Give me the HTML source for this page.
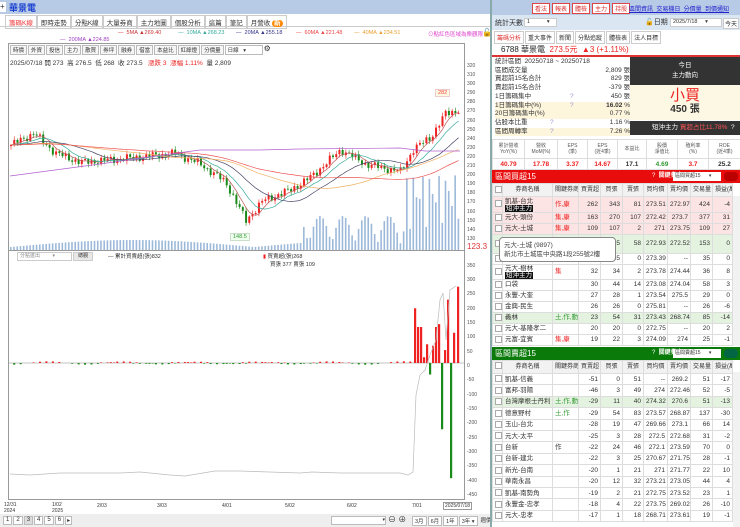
<!DOCTYPE html>
<html><head><meta charset="utf-8">
<style>
*{box-sizing:border-box;margin:0;padding:0}
body{width:740px;height:527px;overflow:hidden;background:#fff;font-family:"Liberation Sans","Noto Sans CJK TC",sans-serif;font-size:7px;color:#333;position:relative}
.a{position:absolute;white-space:nowrap}
table{border-collapse:collapse;table-layout:fixed;position:absolute;font-size:6.5px}
td{border:1px solid #ddd;padding:0 2px;text-align:right;overflow:hidden;white-space:nowrap;height:11.4px;line-height:9px}
table.rt td{height:11px;line-height:8px}
td.l{text-align:left}
td.c{text-align:center}
.hd td{background:#f2f2f2;text-align:center;font-size:6px;height:13px!important}
.pk td{background:#fde4e4}
.gn td{background:#e4f3e0}
.cb{display:inline-block;width:7px;height:7px;border:1px solid #aaa;background:#fff;vertical-align:middle}
.r{color:#e22}.g{color:#393}
.tag{background:#111;color:#fff;padding:0 1px}
</style></head><body>

<div class="a" style="left:0;top:0;width:490px;height:14px;background:#b7cbe6"></div>
<div class="a" style="left:0;top:2px;width:6px;height:10px;background:#fff;font-size:8px;line-height:10px">+</div>
<div class="a" style="left:9px;top:1px;font-size:9px;color:#1a3fd0;font-weight:bold">華景電</div>
<div class="a" style="left:0;top:14px;width:490px;height:13px;background:#fff;border-bottom:1px solid #ccc"></div>
<div class="a" style="left:5px;top:15px;font-size:6.5px;display:flex;gap:0">
<span style="border:1px solid #ccc;padding:1px 3px;color:#e33">籌碼K線</span>
<span style="border:1px solid #ccc;padding:1px 3px">即時走勢</span>
<span style="border:1px solid #ccc;padding:1px 3px">分點K線</span>
<span style="border:1px solid #ccc;padding:1px 3px">大量券商</span>
<span style="border:1px solid #ccc;padding:1px 3px">主力地圖</span>
<span style="border:1px solid #ccc;padding:1px 3px">個股分析</span>
<span style="border:1px solid #ccc;padding:1px 3px">這篇</span>
<span style="border:1px solid #ccc;padding:1px 3px">筆記</span>
<span style="border:1px solid #ccc;padding:1px 3px">月營收 <b style="background:#f80;color:#fff;border-radius:4px;padding:0 2px">新</b></span>
</div>
<div class="a" style="left:118px;top:30px;font-size:5.5px"><span style="color:#c33">— &nbsp;5MA ▲269.40</span></div>
<div class="a" style="left:178px;top:30px;font-size:5.5px;color:#3a9">— &nbsp;10MA ▲268.23</div>
<div class="a" style="left:236px;top:30px;font-size:5.5px;color:#338">— &nbsp;20MA ▲255.18</div>
<div class="a" style="left:296px;top:30px;font-size:5.5px;color:#e44">— &nbsp;60MA ▲221.48</div>
<div class="a" style="left:354px;top:30px;font-size:5.5px;color:#e9a030">— &nbsp;40MA ▲234.51</div>
<div class="a" style="left:428px;top:30px;font-size:5.5px;color:#d4c">⊙點紅色區域為樂觀限</div>
<div class="a" style="left:60px;top:37px;font-size:5.5px;color:#a040c0">— &nbsp;200MA ▲224.85</div>
<div class="a" style="left:482px;top:28px;font-size:8px">🔓</div>

<div class="a" style="left:8px;top:43px;width:457px;height:457px;border:1px solid #999"></div>
<div class="a" style="left:8px;top:250px;width:457px;height:1px;background:#999"></div>
<div class="a" style="left:10px;top:45px;font-size:5.5px;display:flex;gap:1px">
<span style="border:1px solid #bbb;padding:0 2px;background:#f6f6f6">時價</span><span style="border:1px solid #bbb;padding:0 2px;background:#f6f6f6">外資</span><span style="border:1px solid #bbb;padding:0 2px;background:#f6f6f6">投信</span><span style="border:1px solid #bbb;padding:0 2px;background:#f6f6f6">主力</span><span style="border:1px solid #bbb;padding:0 2px;background:#f6f6f6">散買</span><span style="border:1px solid #bbb;padding:0 2px;background:#f6f6f6">券坪</span><span style="border:1px solid #bbb;padding:0 2px;background:#f6f6f6">融券</span><span style="border:1px solid #bbb;padding:0 2px;background:#f6f6f6">借當</span><span style="border:1px solid #bbb;padding:0 2px;background:#f6f6f6">本益比</span><span style="border:1px solid #bbb;padding:0 2px;background:#f6f6f6">紅綠燈</span><span style="border:1px solid #bbb;padding:0 2px;background:#f6f6f6">分價量</span><span style="border:1px solid #bbb;padding:0 2px;width:38px;background:#fff">日線 &nbsp; ▾</span><span style="font-size:8px;line-height:7px">⚙</span></div>
<div class="a" style="left:10px;top:57px;font-size:6.5px">2025/07/18 開 273 &nbsp;高 276.5 &nbsp;低 268 &nbsp;收 273.5 &nbsp; <span class="r">漲跌 3 &nbsp;漲幅 1.11%</span> &nbsp;量 2,809</div>

<svg class="a" style="left:0;top:0" width="490" height="527" id="sv"></svg>
<div class="a" style="left:435px;top:89px;font-size:5.5px;color:#e44;background:#fff8e0;border:1px solid #ecc;padding:0 2px">282</div>
<div class="a" style="left:230px;top:233px;font-size:5.5px;color:#393;background:#efe;border:1px solid #cdc;padding:0 2px">148.5</div>
<div class="a" style="left:467px;top:242px;font-size:8px;color:#d33">123.3</div>
<div class="a" style="left:467px;top:62px;font-size:5px;line-height:9.1px;color:#555">320<br>310<br>300<br>290<br>280<br>270<br>260<br>250<br>240<br>230<br>220<br>210<br>200<br>190<br>180<br>170<br>160<br>150<br>140<br>130</div>
<div class="a" style="left:467px;top:258.5px;font-size:5px;line-height:14.35px;color:#555">350<br>300<br>250<br>200<br>150<br>100<br>50<br>0<br>-50<br>-100<br>-150<br>-200<br>-250<br>-300<br>-350<br>-400<br>-450</div>

<div class="a" style="left:17px;top:252px;width:55px;height:9px;border:1px solid #ccc;font-size:5px;line-height:7px;padding-left:2px;color:#888">分點進出 &nbsp; &nbsp; &nbsp; &nbsp; ▾</div>
<div class="a" style="left:73px;top:252px;width:20px;height:9px;background:#e8e8e8;border:1px solid #ccc;font-size:5px;line-height:7px;text-align:center">總觀</div>
<div class="a" style="left:108px;top:252px;font-size:5.5px">— 累計買賣超(張)832</div>
<div class="a" style="left:263px;top:252px;font-size:5.5px"><span class="r">▮</span> 買賣超(張)268</div>
<div class="a" style="left:270px;top:260px;font-size:5.5px">買張 377 賣張 109</div>

<div class="a" style="left:4px;top:503px;font-size:5px;line-height:5.5px">12/31<br>2024</div>
<div class="a" style="left:52px;top:503px;font-size:5px;line-height:5.5px">1/02<br>2025</div>
<div class="a" style="left:97px;top:503px;font-size:5px">2/03</div>
<div class="a" style="left:157px;top:503px;font-size:5px">3/03</div>
<div class="a" style="left:222px;top:503px;font-size:5px">4/01</div>
<div class="a" style="left:285px;top:503px;font-size:5px">5/02</div>
<div class="a" style="left:347px;top:503px;font-size:5px">6/02</div>
<div class="a" style="left:412px;top:503px;font-size:5px">7/01</div>
<div class="a" style="left:443px;top:502px;font-size:5px;border:1px solid #999;padding:0 1px">2025/07/18</div>
<div class="a" style="left:0;top:514px;width:490px;height:13px;background:#eee"></div>
<div class="a" style="left:3px;top:516px;font-size:6px;display:flex;gap:1px"><span style="border:1px solid #bbb;background:#fff;padding:0 2px">1</span><span style="border:1px solid #bbb;background:#fff;padding:0 2px">2</span><span style="border:1px solid #bbb;background:#ddd;padding:0 2px">3</span><span style="border:1px solid #bbb;background:#fff;padding:0 2px">4</span><span style="border:1px solid #bbb;background:#fff;padding:0 2px">5</span><span style="border:1px solid #bbb;background:#fff;padding:0 2px">6</span><span style="border:1px solid #bbb;background:#fff;padding:0 1px">▸</span></div>
<div class="a" style="left:331px;top:516px;width:55px;height:9px;border:1px solid #bbb;background:#fff;font-size:5px;text-align:right">▾</div>
<div class="a" style="left:388px;top:514px;font-size:8px">⊖ ⊕</div>
<div class="a" style="left:412px;top:516px;font-size:5.5px;display:flex;gap:1px"><span style="border:1px solid #bbb;background:#fff;padding:0 2px">3月</span><span style="border:1px solid #bbb;background:#fff;padding:0 2px">6月</span><span style="border:1px solid #bbb;background:#fff;padding:0 2px">1年</span><span style="border:1px solid #bbb;background:#fff;padding:0 2px">3年 ▾</span><span style="padding:0 2px">週價</span></div>

<div class="a" style="left:490px;top:0;width:250px;height:527px;border-left:2px solid #8aa;background:#fff"></div>
<div class="a" style="left:492px;top:0;width:248px;height:15px;background:#b7cbe6"></div>
<div class="a" style="left:532px;top:3px;font-size:6px;display:flex;gap:2px">
<span style="border:1px solid #d44;background:#fff;color:#d33;padding:0 2px">看法</span><span style="border:1px solid #d44;background:#fff;color:#d33;padding:0 2px">報表</span><span style="border:1px solid #d44;background:#fff;color:#d33;padding:0 2px">體檢</span><span style="border:1px solid #d44;background:#fff;color:#d33;padding:0 2px">主力</span><span style="border:1px solid #d44;background:#fff;color:#d33;padding:0 2px">持股</span></div>
<div class="a" style="left:629px;top:4px;font-size:6px;color:#22c;text-decoration:underline">區間資訊 &nbsp;交易機日 &nbsp;分價量 &nbsp;到價通知</div>
<div class="a" style="left:492px;top:15px;width:248px;height:15px;background:#dbe6f3"></div>
<div class="a" style="left:495px;top:18px;font-size:7px">統計天數</div>
<div class="a" style="left:524px;top:18px;width:33px;height:9px;background:#fff;border:1px solid #ccc;font-size:5.5px;line-height:7px;padding-left:2px">1 &nbsp; &nbsp; &nbsp; &nbsp; &nbsp; ▾</div>
<div class="a" style="left:645px;top:17px;font-size:7px">🔓日期</div>
<div class="a" style="left:670px;top:18px;width:52px;height:9px;background:#fff;border:1px solid #ccc;font-size:5.5px;line-height:7px;padding-left:2px">2025/7/18 &nbsp; &nbsp; ▾</div>
<div class="a" style="left:723px;top:18px;font-size:6px;border:1px solid #ccc;background:#fff;padding:0 1px">今天</div>
<div class="a" style="left:494px;top:31px;font-size:6px;display:flex;gap:1px"><span style="border:1px solid #ccc;padding:1px 2px;color:#d33">籌碼分析</span><span style="border:1px solid #ccc;padding:1px 2px">重大事件</span><span style="border:1px solid #ccc;padding:1px 2px">新聞</span><span style="border:1px solid #ccc;padding:1px 2px">分點追蹤</span><span style="border:1px solid #ccc;padding:1px 2px">體檢表</span><span style="border:1px solid #ccc;padding:1px 2px">法人目標</span></div>
<div class="a" style="left:492px;top:43px;width:248px;height:14px;border-bottom:2px solid #d33"></div>
<div class="a" style="left:501px;top:44px;font-size:8px;color:#222">6788 華景電 &nbsp;<span class="r">273.5元 &nbsp;▲3 (+1.11%)</span></div>
<div class="a" style="left:495px;top:58px;font-size:6.5px;line-height:8.7px;width:135px">
<div>統計區間 &nbsp;20250718 ~ 20250718</div>
<div>區間成交量<span style="float:right">2,809 張</span></div>
<div>買超前15名合計<span style="float:right">829 張</span></div>
<div>賣超前15名合計<span style="float:right">-379 張</span></div>
<div>1日籌碼集中<span style="position:absolute;left:75px;color:#99c">?</span><span style="float:right">450 張</span></div>
<div style="background:#fdf5dc">1日籌碼集中(%)<span style="position:absolute;left:75px;color:#99c">?</span><span style="float:right"><b>16.02</b> %</span></div>
<div style="background:#fdf5dc">20日籌碼集中(%)<span style="float:right">0.77 %</span></div>
<div>佔股本比重<span style="position:absolute;left:55px;color:#99c">?</span><span style="float:right">1.16 %</span></div>
<div style="background:#fdf5dc">區間周轉率<span style="position:absolute;left:55px;color:#99c">?</span><span style="float:right">7.26 %</span></div>
</div>
<div class="a" style="left:630px;top:57px;width:110px;height:28px;background:#333;color:#fff;font-size:6.5px;text-align:center;line-height:10px;padding-top:4px">今日<br>主力動向</div>
<div class="a" style="left:630px;top:85px;width:110px;height:35px;background:#fdf8e4;text-align:center"><div style="font-size:15px;color:#e22;line-height:17px;margin-top:2px">小買</div><div style="font-size:10px;font-weight:bold;line-height:11px">450 張</div></div>
<div class="a" style="left:630px;top:121px;width:110px;height:14px;background:#333;color:#fff;font-size:6.5px;line-height:14px;padding-left:22px">短沖主力 <span style="color:#f55">買超占比11.78%</span> &nbsp;?</div>

<table style="left:492px;top:139px;width:248px">
<colgroup><col style="width:32px"><col style="width:33px"><col style="width:30px"><col style="width:30px"><col style="width:29px"><col style="width:31px"><col style="width:31px"><col style="width:32px"></colgroup>
<tr style="font-size:5px;color:#555"><td class="c" style="height:19px;line-height:6px">累計營收<br>YoY(%)</td><td class="c" style="line-height:6px">營收<br>MoM(%)</td><td class="c" style="line-height:6px">EPS<br>(季)</td><td class="c" style="line-height:6px">EPS<br>(近4季)</td><td class="c">本益比</td><td class="c" style="line-height:6px">股價<br>淨值比</td><td class="c" style="line-height:6px">殖利率<br>(%)</td><td class="c" style="line-height:6px">ROE<br>(近4季)</td></tr>
<tr style="font-weight:bold;font-size:6.5px"><td class="c r">40.79</td><td class="c r">17.78</td><td class="c r">3.37</td><td class="c r">14.67</td><td class="c">17.1</td><td class="c g">4.69</td><td class="c r">3.7</td><td class="c">25.2</td></tr>
</table>

<div class="a" style="left:492px;top:170px;width:248px;height:13px;background:#e80c0c;color:#fff;font-size:8px;line-height:13px;padding-left:3px">區間買超15<span style="position:absolute;left:160px;font-size:6px">? &nbsp;<b>關鍵券商:</b></span></div>
<div class="a" style="left:673px;top:172px;width:48px;height:9px;background:#fff;font-size:5px;line-height:8px;padding-left:2px">區間買超15 &nbsp; &nbsp; &nbsp;▾</div>
<div class="a" style="left:724px;top:172px;width:14px;height:9px;background:#b00;border-radius:4px"></div>
<table class="rt" style="left:492px;top:183px;width:240px">
<colgroup><col style="width:10px"><col style="width:50px"><col style="width:26px"><col style="width:22px"><col style="width:22px"><col style="width:21px"><col style="width:24px"><col style="width:23px"><col style="width:22px"><col style="width:20px"></colgroup>
<tr class="hd"><td><span class="cb"></span></td><td>券商名稱</td><td>關鍵券商</td><td>買賣超</td><td>買張</td><td>賣張</td><td>買均價</td><td>賣均價</td><td>交易量</td><td>損益(萬)</td></tr>
<tr class="pk"><td><span class="cb"></span></td><td class="l" style="height:16px;line-height:7px">凱基-台北<br><span class="tag">短沖主力</span></td><td class="l r">作,康</td><td>262</td><td>343</td><td>81</td><td>273.51</td><td>272.97</td><td>424</td><td>-4</td></tr>
<tr class="pk"><td><span class="cb"></span></td><td class="l">元大-頭份</td><td class="l r">集,康</td><td>163</td><td>270</td><td>107</td><td>272.42</td><td>273.7</td><td>377</td><td>31</td></tr>
<tr class="pk"><td><span class="cb"></span></td><td class="l">元大-土城</td><td class="l r">集,康</td><td>109</td><td>107</td><td>2</td><td>271</td><td>273.75</td><td>109</td><td>27</td></tr>
<tr class="gn"><td style="height:19px"><span class="cb"></span></td><td class="l"></td><td></td><td></td><td>95</td><td>58</td><td>272.93</td><td>272.52</td><td>153</td><td>0</td></tr>
<tr><td><span class="cb"></span></td><td></td><td></td><td></td><td>35</td><td>0</td><td>273.39</td><td>--</td><td>35</td><td>0</td></tr>
<tr><td><span class="cb"></span></td><td class="l" style="height:15px;line-height:7px">元大-樹林<br><span class="tag">短沖主力</span></td><td class="l r">集</td><td>32</td><td>34</td><td>2</td><td>273.78</td><td>274.44</td><td>36</td><td>8</td></tr>
<tr><td><span class="cb"></span></td><td class="l">口袋</td><td></td><td>30</td><td>44</td><td>14</td><td>273.08</td><td>274.04</td><td>58</td><td>3</td></tr>
<tr><td><span class="cb"></span></td><td class="l">永豐-大奎</td><td></td><td>27</td><td>28</td><td>1</td><td>273.54</td><td>275.5</td><td>29</td><td>0</td></tr>
<tr><td><span class="cb"></span></td><td class="l">金興-民生</td><td></td><td>26</td><td>26</td><td>0</td><td>275.81</td><td>--</td><td>26</td><td>-6</td></tr>
<tr class="gn"><td><span class="cb"></span></td><td class="l">義林</td><td class="l g">土,作,動</td><td>23</td><td>54</td><td>31</td><td>273.43</td><td>268.74</td><td>85</td><td>-14</td></tr>
<tr><td><span class="cb"></span></td><td class="l">元大-基隆孝二</td><td></td><td>20</td><td>20</td><td>0</td><td>272.75</td><td>--</td><td>20</td><td>2</td></tr>
<tr><td><span class="cb"></span></td><td class="l">元富-宜賓</td><td class="l r">集,康</td><td>19</td><td>22</td><td>3</td><td>274.09</td><td>274</td><td>25</td><td>-1</td></tr>
</table>
<div class="a" style="left:499px;top:237px;width:117px;height:25px;background:#fff;border:1px solid #888;border-radius:4px;font-size:6.5px;line-height:9px;padding:3px 4px;color:#444">元大-土城 (9897)<br>新北市土城區中央路1段255號2樓</div>
<div class="a" style="left:733px;top:196px;width:7px;height:150px;background:#f2f2f2"></div>

<div class="a" style="left:492px;top:347px;width:248px;height:13px;background:#0a7a0a;color:#fff;font-size:8px;line-height:13px;padding-left:3px">區間賣超15<span style="position:absolute;left:160px;font-size:6px">? &nbsp;<b>關鍵券商:</b></span></div>
<div class="a" style="left:673px;top:349px;width:48px;height:9px;background:#fff;font-size:5px;line-height:8px;padding-left:2px">區間賣超15 &nbsp; &nbsp; &nbsp;▾</div>
<div class="a" style="left:724px;top:349px;width:14px;height:9px;background:#064;border-radius:4px"></div>
<table style="left:492px;top:360px;width:240px">
<colgroup><col style="width:10px"><col style="width:50px"><col style="width:26px"><col style="width:22px"><col style="width:22px"><col style="width:21px"><col style="width:24px"><col style="width:23px"><col style="width:22px"><col style="width:20px"></colgroup>
<tr class="hd"><td><span class="cb"></span></td><td>券商名稱</td><td>關鍵券商</td><td>買賣超</td><td>買張</td><td>賣張</td><td>買均價</td><td>賣均價</td><td>交易量</td><td>損益(萬)</td></tr>
<tr><td><span class="cb"></span></td><td class="l">凱基-信義</td><td></td><td>-51</td><td>0</td><td>51</td><td>--</td><td>269.2</td><td>51</td><td>-17</td></tr>
<tr><td><span class="cb"></span></td><td class="l">富邦-羽陽</td><td></td><td>-46</td><td>3</td><td>49</td><td>274</td><td>272.46</td><td>52</td><td>-5</td></tr>
<tr class="gn"><td><span class="cb"></span></td><td class="l">台灣摩根士丹利</td><td class="l g">土,作,動</td><td>-29</td><td>11</td><td>40</td><td>274.32</td><td>270.6</td><td>51</td><td>-13</td></tr>
<tr><td><span class="cb"></span></td><td class="l">德意野村</td><td class="l g">土,作</td><td>-29</td><td>54</td><td>83</td><td>273.57</td><td>268.87</td><td>137</td><td>-30</td></tr>
<tr><td><span class="cb"></span></td><td class="l">玉山-台北</td><td></td><td>-28</td><td>19</td><td>47</td><td>269.66</td><td>273.1</td><td>66</td><td>14</td></tr>
<tr><td><span class="cb"></span></td><td class="l">元大-太平</td><td></td><td>-25</td><td>3</td><td>28</td><td>272.5</td><td>272.68</td><td>31</td><td>-2</td></tr>
<tr><td><span class="cb"></span></td><td class="l">台新</td><td class="l">作</td><td>-22</td><td>24</td><td>46</td><td>272.1</td><td>273.59</td><td>70</td><td>0</td></tr>
<tr><td><span class="cb"></span></td><td class="l">台新-建北</td><td></td><td>-22</td><td>3</td><td>25</td><td>270.67</td><td>271.75</td><td>28</td><td>-1</td></tr>
<tr><td><span class="cb"></span></td><td class="l">新光-台南</td><td></td><td>-20</td><td>1</td><td>21</td><td>271</td><td>271.77</td><td>22</td><td>10</td></tr>
<tr><td><span class="cb"></span></td><td class="l">華南永昌</td><td></td><td>-20</td><td>12</td><td>32</td><td>273.21</td><td>273.05</td><td>44</td><td>4</td></tr>
<tr><td><span class="cb"></span></td><td class="l">凱基-南勢角</td><td></td><td>-19</td><td>2</td><td>21</td><td>272.75</td><td>273.52</td><td>23</td><td>1</td></tr>
<tr><td><span class="cb"></span></td><td class="l">永豐金-忠孝</td><td></td><td>-18</td><td>4</td><td>22</td><td>273.75</td><td>269.02</td><td>26</td><td>-10</td></tr>
<tr><td><span class="cb"></span></td><td class="l">元大-忠孝</td><td></td><td>-17</td><td>1</td><td>18</td><td>268.71</td><td>273.61</td><td>19</td><td>-1</td></tr>
</table>
<div class="a" style="left:733px;top:372px;width:7px;height:155px;background:#f2f2f2"></div>

<script>
(function(){
var sv=document.getElementById('sv'),s='';
function py(p){return 66+(320-p)*0.91;}
var kp=[[8,232],[33,246],[55,224],[80,214],[120,218],[175,224],[200,212],[225,192],[245,150],[262,172],[290,184],[310,198],[340,228],[365,212],[400,204],[412,228],[430,242],[445,268],[460,272]];
function tgt(x){for(var k=1;k<kp.length;k++){if(x<=kp[k][0]){var a=kp[k-1],b=kp[k],t=(x-a[0])/(b[0]-a[0]);return a[1]+(b[1]-a[1])*t;}}return 272;}
var N=140,dx=3.22,cl=[],prev=232;
for(var i=0;i<N;i++){var x=10+i*dx;var c=tgt(x)+Math.sin(i*2.3)*3+Math.sin(i*0.9)*2;var o=prev;var hi=Math.max(o,c)+1+Math.abs(Math.sin(i*1.7))*3,lo=Math.min(o,c)-1-Math.abs(Math.cos(i*1.3))*3;
var col=c>=o?'#e22':'#1a8a1a';
s+='<line x1="'+(x+1)+'" x2="'+(x+1)+'" y1="'+py(hi)+'" y2="'+py(lo)+'" stroke="'+col+'" stroke-width="0.6"/>';
var y1=py(Math.max(o,c)),h=Math.max(0.8,Math.abs(py(o)-py(c)));
s+='<rect x="'+x+'" y="'+y1+'" width="2" height="'+h+'" fill="'+col+'"/>';
cl.push(c);prev=c;
var vh=3+Math.abs(Math.sin(i*3.1))*7;if(x>300)vh=6+Math.abs(Math.sin(i*2.7))*28;if(x>405)vh=20+Math.abs(Math.sin(i*1.9))*55;
s+='<rect x="'+x+'" y="'+(250-vh)+'" width="1.6" height="'+vh+'" fill="#9db9da"/>';}
function ma(n,col){var pts=[];for(var i=0;i<N;i++){var sm=0;for(var j=0;j<n;j++){sm+=cl[Math.max(0,i-j)];}pts.push((11+i*dx).toFixed(1)+','+py(sm/n).toFixed(1));}s+='<polyline points="'+pts.join(' ')+'" fill="none" stroke="'+col+'" stroke-width="0.7"/>';}
ma(5,'#b55');ma(10,'#3a9');ma(20,'#446');ma(40,'#f0b060');ma(60,'#e55');
s+='<polyline points="10,176 100,164 170,154 200,150 260,150 300,149 400,148 425,151 460,151" fill="none" stroke="#b060d0" stroke-width="0.7"/>';
s+='<line x1="9" x2="464" y1="363" y2="363" stroke="#888" stroke-width="0.6"/>';
for(var i=0;i<125;i++){var x=10+i*dx;var v=Math.sin(i*4.7)*Math.sin(i*1.3)*6;if(Math.abs(v)<1.5)continue;var h=v*0.288;var col=v>0?'#e22':'#1a8a1a';s+='<rect x="'+x+'" y="'+(v>0?363-h:363)+'" width="2" height="'+Math.abs(h)+'" fill="'+col+'"/>';}
var big=[[415,190],[418,125],[421,125],[424,20],[427,65],[430,-40],[433,60],[436,125],[439,135],[442,-230],[445,45],[448,220],[451,-400],[454,105],[458,265]];
big.forEach(function(b){var h=b[1]*0.288;var col=b[1]>0?'#e22':'#1a8a1a';s+='<rect x="'+(b[0]-1)+'" y="'+(b[1]>0?363-h:363)+'" width="2.2" height="'+Math.abs(h)+'" fill="'+col+'"/>';});
s+='<polyline points="10,474 30,475 60,473 120,473 140,472 170,475 185,476 215,471 240,471 300,473 312,472 340,473 400,473 408,475 413,472 416,395 420,375 425,370 430,355 436,340 440,300 443,293 446,340 450,290 456,286" fill="none" stroke="#bbb" stroke-width="0.7"/>';
sv.innerHTML=s;
})();
</script>
</body></html>
